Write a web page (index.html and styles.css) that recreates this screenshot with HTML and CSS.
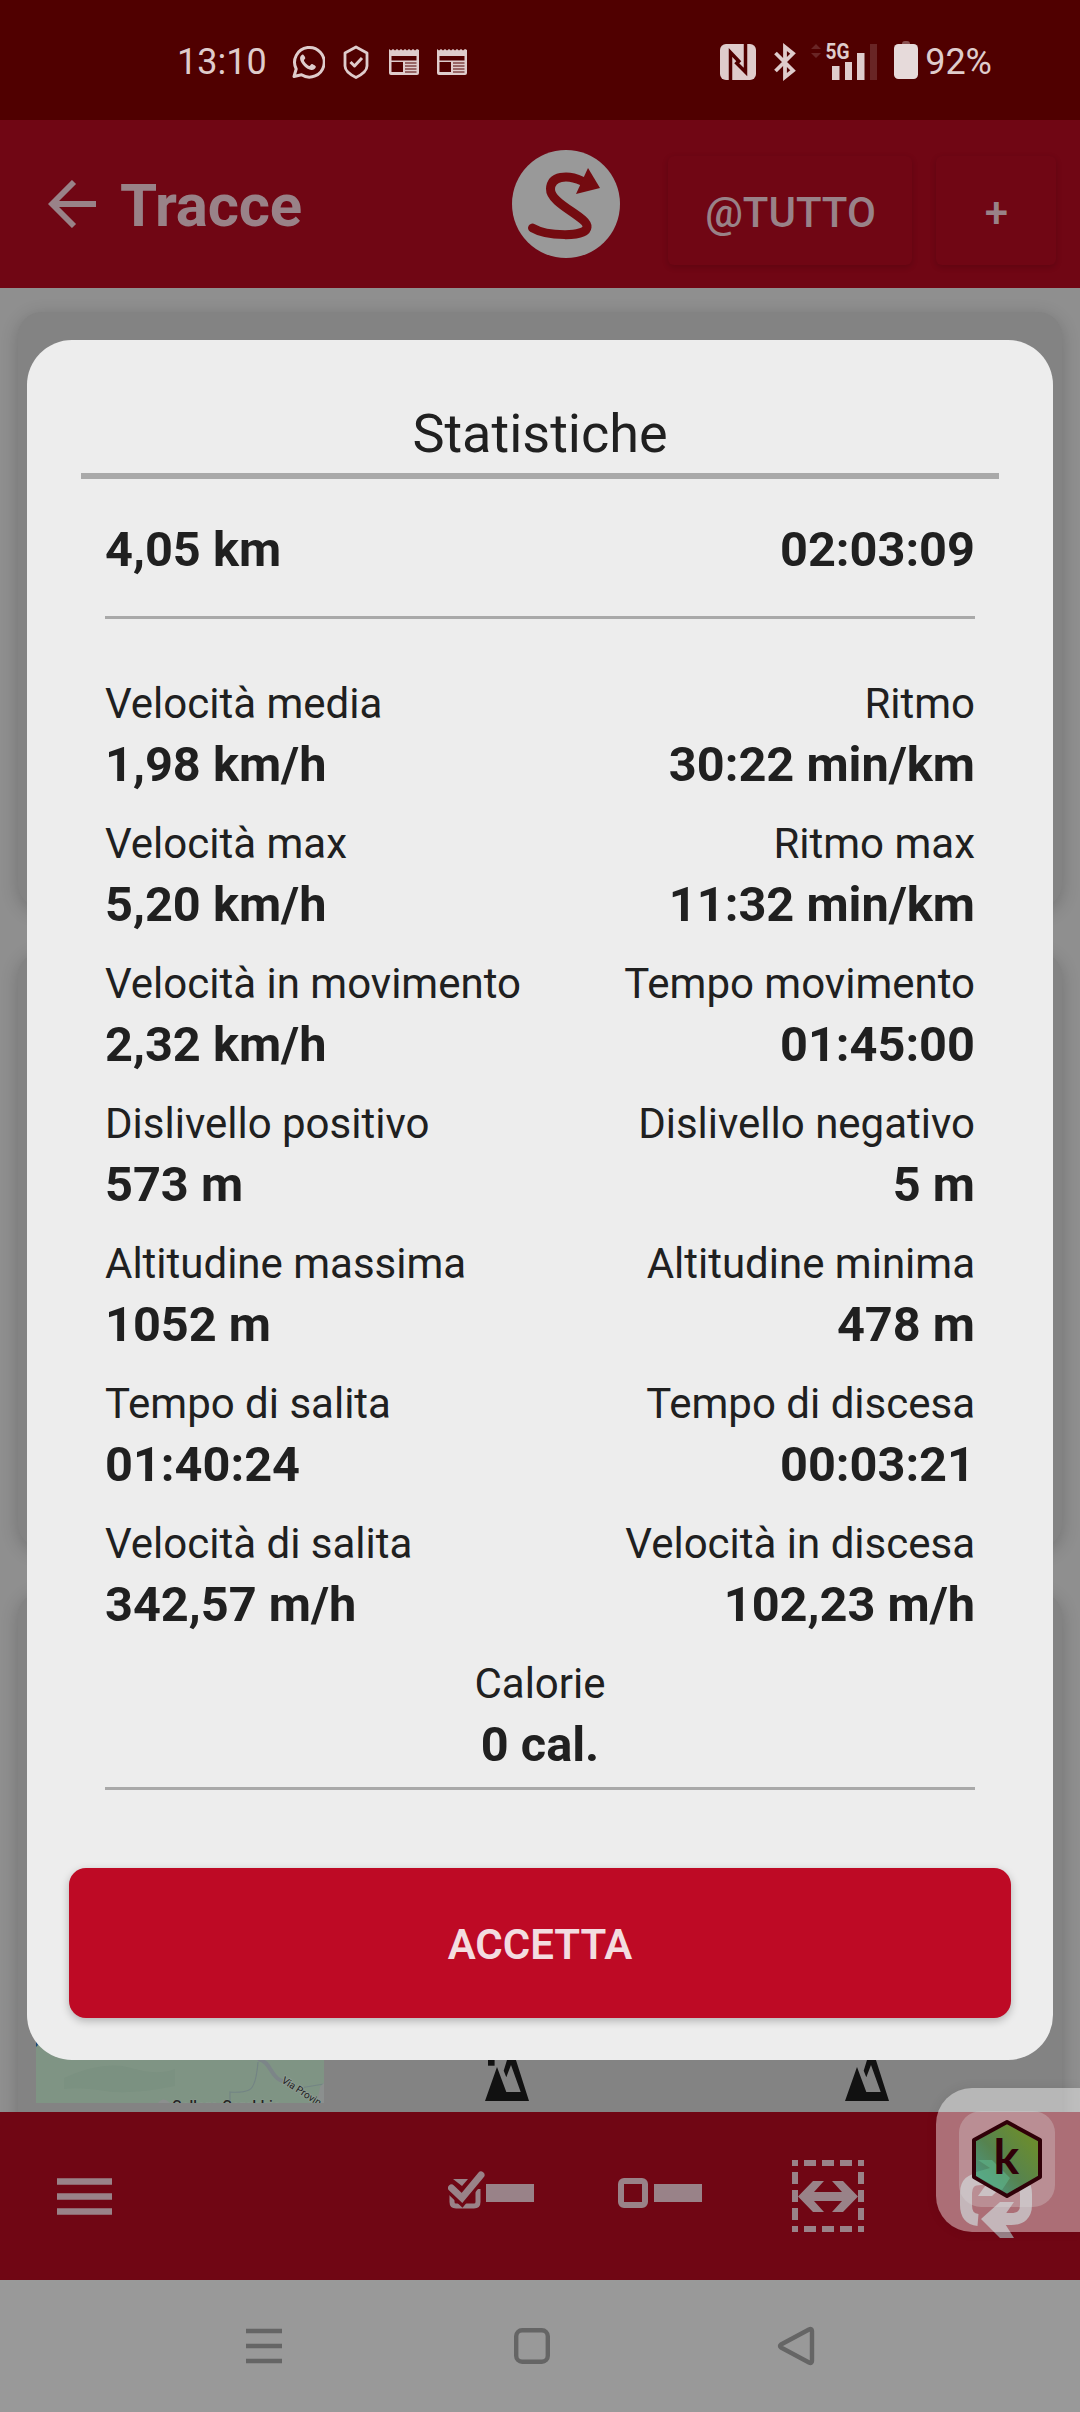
FILE: index.html
```html
<!DOCTYPE html>
<html lang="it">
<head>
    <meta charset="UTF-8">
    <meta name="viewport" content="width=device-width, initial-scale=1.0">
    <title>Tracce</title>
    <link rel="stylesheet" href="styles.css">
</head>
<body>
    <div class="app">
        <!-- Barra di stato -->
        <div class="status-bar">
            <div class="status-left">
                <span class="clock">13:10</span>
                <svg class="whatsapp" width="34" height="34" viewBox="0 0 34 34" fill="none">
                    <path d="M3 31.5 5.2 24A14.8 14.8 0 1 1 10.500 29.800Z" stroke="currentColor" stroke-width="3" stroke-linejoin="round"/>
                    <path d="M11.500 9.500c-1.600.6-2.700 2.400-2.400 4.500.6 4.600 6.300 10.400 11.200 10.900 2.200.2 4.300-1 4.600-3.200.1-.8-3.500-2.900-4.300-2.700-.8.2-1.400 2-2.200 1.900-1.700-.4-5-3.600-5.500-5.400-.1-.8 1.400-1.600 1.400-2.500 0-.7-1.700-3.800-2.800-3.500z" fill="currentColor"/>
                </svg>
                <svg class="shield" width="26" height="34" viewBox="0 0 26 34" fill="none" stroke="currentColor" stroke-width="2.800" stroke-linejoin="round">
                    <path d="M13 2 24 8v13c0 4.500-5 8.500-11 11.500C7 29.500 2 25.500 2 21V8Z"/>
                    <path d="m7.500 17 4 4 7.500-8" stroke-width="3"/>
                </svg>
                <svg class="news" width="30" height="28" viewBox="0 0 30 28">
                    <path d="M0 1l2 1.500L4 1l2 1.500L8 1l2 1.500L12 1l2 1.500L16 1l2 1.500L20 1l2 1.500L24 1l2 1.500L28 1l2 1v23q0 2-2 2H2q-2 0-2-2ZM2.500 8v4.500h25V8ZM2.500 14v10H14V14Z" fill="currentColor" fill-rule="evenodd"/>
                    <path d="M16 15h11.500M16 18h11.500M16 21h11.500M16 24h11.500" stroke="#500000" stroke-width="1"/>
                </svg>
                <svg class="news" width="30" height="28" viewBox="0 0 30 28">
                    <path d="M0 1l2 1.500L4 1l2 1.500L8 1l2 1.500L12 1l2 1.500L16 1l2 1.500L20 1l2 1.500L24 1l2 1.500L28 1l2 1v23q0 2-2 2H2q-2 0-2-2ZM2.500 8v4.500h25V8ZM2.500 14v10H14V14Z" fill="currentColor" fill-rule="evenodd"/>
                    <path d="M16 15h11.500M16 18h11.500M16 21h11.500M16 24h11.500" stroke="#500000" stroke-width="1"/>
                </svg>
            </div>
            <div class="status-right">
                <svg class="nfc" width="36" height="36" viewBox="0 0 36 36" fill="none">
                    <rect width="36" height="36" rx="6" fill="currentColor"/>
                    <path d="M10.500 36V8.500L20 18.500M25.500 0v28L15.500 18" stroke="#500000" stroke-width="3.500"/>
                </svg>
                <svg class="bluetooth" width="22" height="38" viewBox="0 0 22 38" fill="none" stroke="currentColor" stroke-width="3.800">
                    <path d="M1.500 10 19 27.500l-8 6.500V4l8 6.500L1.500 28"/>
                </svg>
                <svg class="signal" width="66" height="38" viewBox="0 0 66 38" fill="currentColor">
                    <path d="m0 6 5-5 5 5ZM0 10l5 5 5-5Z" opacity=".18"/>
                    <text class="signal-label" x="14.500" y="16" textLength="24" lengthAdjust="spacingAndGlyphs">5G</text>
                    <path d="M21 23h7.500v14H21zM34 19h7v18h-7zM46 10h7.500v27H46z"/>
                    <path d="M59 1h7v36h-7z" opacity=".18"/>
                </svg>
                <svg class="battery" width="24" height="38" viewBox="0 0 24 38" fill="currentColor">
                    <path d="M8 3q0-3 3-3h2q3 0 3 3z" opacity=".4"/>
                    <rect y="3" width="24" height="35" rx="4.500" fill="#e6dada"/>
                </svg>
                <span class="percent">92%</span>
            </div>
        </div>

        <!-- Intestazione -->
        <header class="header">
            <svg class="back" width="48" height="48" viewBox="0 0 48 48" fill="none" stroke="currentColor" stroke-width="5.800">
                <path d="M48 24H4M26 2 4 24l22 22"/>
            </svg>
            <h1 class="title">Tracce</h1>
            <svg class="logo" width="108" height="108" viewBox="0 0 108 108">
                <circle cx="54" cy="54" r="54" fill="#999"/>
                <path d="M20.500 78C34 86 74 88 75 77C76 67 38 54 38.500 39C39 26 55 24 70 31" fill="none" stroke="#740b10" stroke-width="9" stroke-linecap="round"/>
                <path d="M76 18 88 38 64 44Z" fill="#740b10"/>
            </svg>
            <button class="header-btn filter">@TUTTO</button>
            <button class="header-btn add">+</button>
        </header>

        <!-- Elenco tracce -->
        <main class="tracks">
            <div class="card"></div>
            <div class="card"></div>
            <div class="card last">
                <svg class="map" width="288" height="66" viewBox="0 0 288 66">
                    <rect width="288" height="66" fill="#7f9484"/>
                    <path d="M28 41q40-18 67-10t44 1v17q-45 9-70 5t-41-2z" fill="#7b9181"/>
                    <path d="M0 0h10L0 10z" fill="#174777"/>
                    <path d="M222 22c12 2 13 17 22 21l10 4" fill="none" stroke="#7c8588" stroke-width="4"/>
                    <path d="M222 25q-2 25-9 28t-19 2v11M264 51l24-4" fill="none" stroke="#738484" stroke-width="1.200"/>
                    <path d="m281 66 3-16 4-4v20zM122 66q5-7 12 0z" fill="#8b8f8e"/>
                    <text class="map-road" x="245" y="45" transform="rotate(33 245 45)">Via Provin</text>
                    <text class="map-place" x="136" y="74" textLength="109" lengthAdjust="spacingAndGlyphs">Calloro Carabbio</text>
                </svg>
                <svg class="mountain" width="44" height="48" viewBox="0 0 44 48" fill="#111">
                    <path d="M3 0h6.600v8.700H3z"/>
                    <path d="M0 44 12 10l9.300 25h14.400L26 8l-4.700 12.300-2.600-6.600L22.300 2 23 0h7l14 44Z"/>
                </svg>
                <svg class="mountain" width="44" height="48" viewBox="0 0 44 48" fill="#111">
                    <path d="M0 44 12 10l9.300 25h14.400L26 8l-4.700 12.300-2.600-6.600L22.300 2 23 0h7l14 44Z"/>
                </svg>
            </div>
        </main>

        <!-- Barra strumenti -->
        <footer class="toolbar">
            <svg class="menu" width="55" height="38" viewBox="0 0 55 38">
                <path d="M0 3.500h55M0 18.500h55M0 33.500h55" stroke="currentColor" stroke-width="6.500"/>
            </svg>
            <svg class="select-all" width="86" height="38" viewBox="0 0 86 38" fill="none">
                <path d="M4 24v7q0 4 4 4h18q4 0 4-4V18" stroke="currentColor" stroke-width="5"/>
                <path d="M5 8h15l-6 7z" fill="currentColor"/>
                <path d="m3.500 18 10.500 10L33 5" stroke="#700614" stroke-width="12"/>
                <path d="m3.500 17 10.500 10L33 4" stroke="currentColor" stroke-width="7" stroke-linecap="round"/>
                <path d="M38 13h48v18H38z" fill="currentColor"/>
            </svg>
            <svg class="select-none" width="84" height="30" viewBox="0 0 84 30">
                <rect x="3" y="3" width="24" height="24" rx="3" fill="none" stroke="currentColor" stroke-width="6"/>
                <path d="M36 6h48v18H36z" fill="currentColor"/>
            </svg>
            <svg class="range" width="72" height="72" viewBox="0 0 72 72" fill="currentColor">
                <path d="M0 0h6v6H0zM12 0h12v6H12zM30 0h12v6H30zM48 0h12v6H48zM66 0h6v6h-6zM0 66h6v6H0zM12 66h12v6H12zM30 66h12v6H30zM48 66h12v6H48zM66 66h6v6h-6zM0 12h6v12H0zM0 30h6v12H0zM0 48h6v12H0zM66 12h6v12h-6zM66 30h6v12h-6zM66 48h6v12h-6z"/>
                <path d="M6 36.500 21 21h11L22 32h28L40 21h11l15 15.500L51 52H40l10-11H22l10 11H21Z"/>
            </svg>
            <svg class="repeat" width="72" height="78" viewBox="0 0 72 78">
                <path d="M38 59H51Q66 59 66 45V34Q66 20 51 19M30 19H21Q6 19 6 33V45Q6 59 18 60" fill="none" stroke="currentColor" stroke-width="12"/>
                <path d="M17 0h14l19 19-18 17H18l12-17ZM54 78H40L21 59l19-17h14L42 59Z" fill="currentColor"/>
            </svg>
        </footer>

        <!-- Navigazione di sistema -->
        <nav class="system-nav">
            <svg class="nav-recent" width="36" height="36" viewBox="0 0 36 36">
                <path d="M0 3h36M0 18h36M0 33h36" stroke="currentColor" stroke-width="4.500"/>
            </svg>
            <svg class="nav-home" width="36" height="36" viewBox="0 0 36 36">
                <rect x="2.200" y="2.200" width="31.600" height="31.600" rx="6" fill="none" stroke="currentColor" stroke-width="4.400"/>
            </svg>
            <svg class="nav-back" width="38" height="40" viewBox="0 0 38 40">
                <path d="M32 3.500Q35 2 35 5v30q0 3-3 1.500L4 21.500Q2 20 4 18.500Z" fill="none" stroke="currentColor" stroke-width="4.400" stroke-linejoin="round"/>
            </svg>
        </nav>

        <!-- Finestra statistiche -->
        <section class="dialog">
            <h2 class="dialog-title">Statistiche</h2>
            <div class="stats">
                <div class="summary">
                    <strong>4,05 km</strong>
                    <strong>02:03:09</strong>
                </div>
                <div class="row">
                    <p class="stat">Velocità media<strong>1,98 km/h</strong></p>
                    <p class="stat">Ritmo<strong>30:22 min/km</strong></p>
                </div>
                <div class="row">
                    <p class="stat">Velocità max<strong>5,20 km/h</strong></p>
                    <p class="stat">Ritmo max<strong>11:32 min/km</strong></p>
                </div>
                <div class="row">
                    <p class="stat">Velocità in movimento<strong>2,32 km/h</strong></p>
                    <p class="stat">Tempo movimento<strong>01:45:00</strong></p>
                </div>
                <div class="row">
                    <p class="stat">Dislivello positivo<strong>573 m</strong></p>
                    <p class="stat">Dislivello negativo<strong>5 m</strong></p>
                </div>
                <div class="row">
                    <p class="stat">Altitudine massima<strong>1052 m</strong></p>
                    <p class="stat">Altitudine minima<strong>478 m</strong></p>
                </div>
                <div class="row">
                    <p class="stat">Tempo di salita<strong>01:40:24</strong></p>
                    <p class="stat">Tempo di discesa<strong>00:03:21</strong></p>
                </div>
                <div class="row">
                    <p class="stat">Velocità di salita<strong>342,57 m/h</strong></p>
                    <p class="stat">Velocità in discesa<strong>102,23 m/h</strong></p>
                </div>
                <div class="row calories">
                    <p class="stat">Calorie<strong>0 cal.</strong></p>
                </div>
            </div>
            <button class="accept">ACCETTA</button>
        </section>

        <!-- Pulsante flottante sopra la barra -->
        <div class="bubble">
            <div class="bubble-icon">
                <svg width="72" height="80" viewBox="0 0 72 80">
                    <defs>
                        <linearGradient id="hex" x1="1" y1="0" x2="0" y2="1">
                            <stop offset=".2" stop-color="#6a8c30"/>
                            <stop offset=".55" stop-color="#56834f"/>
                            <stop offset=".85" stop-color="#4d9580"/>
                        </linearGradient>
                    </defs>
                    <path d="M36 3 69 21v37L36 77 3 58V21Z" fill="url(#hex)" stroke="#300008" stroke-width="4" stroke-linejoin="round"/>
                    <path d="M7 41h14l18 18-8 12-8-3L5 57V53l14-4Z" fill="#5fb68b" opacity=".6"/>
                    <text class="bubble-k" x="22.500" y="55">k</text>
                </svg>
            </div>
        </div>
    </div>
</body>
</html>
```
FILE: styles.css
```css
* {
    box-sizing: border-box;
}

body {
    margin: 0;
    font-family: Roboto, 'Noto Sans', sans-serif;
    background-color: #999;
}

svg {
    display: block;
    flex-shrink: 0;
}

button {
    border: none;
    font-family: inherit;
    padding: 0;
}

.app {
    position: relative;
    display: flex;
    flex-direction: column;
    width: 1080px;
    height: 2412px;
    overflow: hidden;
}

/* Barra di stato */
.status-bar {
    display: flex;
    justify-content: space-between;
    height: 120px;
    padding: 3px 88px 0 177px;
    background-color: #500000;
    color: #dfcccc;
    font-size: 36px;
}

.status-left,
.status-right {
    display: flex;
    align-items: center;
}

.clock {
    width: 114px;
}

.shield {
    margin-left: 18px;
}

.news {
    margin-left: 20px;
}

.news + .news {
    margin-left: 18px;
}

.bluetooth {
    margin-left: 18px;
}

.signal {
    margin-left: 15px;
    overflow: visible;
}

.signal-label {
    font-size: 22px;
    font-weight: 700;
}

.battery {
    margin: 0 7px 4px 17px;
}

/* Intestazione */
.header {
    display: flex;
    align-items: flex-start;
    height: 168px;
    padding: 30px 24px 0 48px;
    background-color: #700614;
    color: #998288;
}

.back {
    margin-top: 30px;
}

.title {
    width: 392px;
    margin: 19px 0 0 24px;
    font-size: 60px;
    line-height: 74px;
    font-weight: 700;
    letter-spacing: -0.2px;
}

.header-btn {
    height: 109px;
    margin-top: 6px;
    padding-top: 3px;
    border-radius: 6px;
    background: none;
    box-shadow: 0 2px 6px rgba(0, 0, 0, 0.16);
    color: inherit;
    font-size: 42px;
    font-weight: 500;
}

.filter {
    width: 244px;
    margin-left: 48px;
    padding-left: 1px;
}

.add {
    width: 120px;
    margin-left: 24px;
    padding-left: 1px;
}

/* Elenco tracce */
.tracks {
    display: flex;
    flex-direction: column;
    gap: 44px;
    height: 1824px;
    padding: 24px 18px 0;
    background-color: #8f8f8f;
    overflow: hidden;
}

.card {
    flex: none;
    height: 596px;
    border-radius: 24px;
    background-color: #838383;
    box-shadow: 0 4px 18px rgba(0, 0, 0, 0.2);
}

.last {
    display: flex;
    align-items: flex-start;
    padding: 445px 0 0 18px;
}

.mountain {
    margin: 20px 0 0 161px;
}

.mountain + .mountain {
    margin-left: 316px;
}

.map-road {
    font-size: 10px;
    fill: #222;
    stroke: #8b9990;
    stroke-width: 2px;
    paint-order: stroke;
}

.map-place {
    font-size: 14px;
    font-weight: 500;
    fill: #222;
    stroke: #8b9990;
    stroke-width: 1px;
    paint-order: stroke;
}

/* Barra strumenti */
.toolbar {
    display: flex;
    align-items: flex-start;
    height: 168px;
    padding: 48px 48px 0 57px;
    background-color: #700614;
    color: #998288;
}

.menu {
    margin-top: 18px;
}

.select-all {
    margin: 11px 0 0 336px;
}

.select-none {
    margin: 18px 0 0 84px;
}

.range {
    margin-left: 90px;
}

.repeat {
    margin-left: 96px;
}

/* Navigazione di sistema */
.system-nav {
    display: flex;
    align-items: center;
    height: 132px;
    padding-left: 246px;
    background-color: #999;
    color: #656565;
}

.nav-home {
    margin-left: 232px;
}

.nav-back {
    margin-left: 227px;
}

/* Finestra statistiche */
.dialog {
    position: absolute;
    top: 340px;
    left: 27px;
    right: 27px;
    height: 1720px;
    padding: 58px 42px 0;
    border-radius: 45px;
    background-color: #ededed;
    color: #202020;
}

.dialog-title {
    height: 81px;
    margin: 0 12px;
    border-bottom: 6px solid #a9a9a9;
    font-size: 54px;
    line-height: 71px;
    font-weight: 400;
    text-align: center;
}

.stats {
    height: 1311px;
    margin: 0 36px;
    border-bottom: 3px solid #a9a9a9;
}

.summary {
    display: flex;
    justify-content: space-between;
    height: 140px;
    margin-bottom: 56px;
    padding-top: 38px;
    border-bottom: 3px solid #a9a9a9;
    font-size: 48.7px;
    line-height: 66px;
}

.row {
    display: flex;
    justify-content: space-between;
    height: 140px;
}

.stat {
    margin: 0;
    font-size: 42px;
    line-height: 57px;
}

.stat + .stat {
    text-align: right;
}

.stat strong {
    display: block;
    font-size: 48.7px;
    line-height: 66px;
}

.calories {
    justify-content: center;
    text-align: center;
}

.accept {
    display: block;
    width: 100%;
    height: 150px;
    margin-top: 78px;
    padding-top: 2px;
    border-radius: 17px;
    background-color: #be0a25;
    box-shadow: 0 3px 9px rgba(0, 0, 0, 0.25);
    color: #f3dce0;
    font-size: 42px;
    font-weight: 600;
}

/* Pulsante flottante */
.bubble {
    position: absolute;
    top: 2088px;
    right: 0;
    width: 144px;
    height: 144px;
    padding: 23px;
    border-radius: 36px 0 0 36px;
    background-color: rgba(255, 255, 255, 0.42);
    box-shadow: 0 0 12px rgba(0, 0, 0, 0.08);
}

.bubble-icon {
    width: 96px;
    height: 96px;
    padding: 8px 12px;
    border-radius: 22px;
    background-color: rgba(220, 220, 220, 0.3);
}

.bubble-k {
    font-family: Lato, sans-serif;
    font-size: 48px;
    font-weight: 700;
    fill: #300008;
}
```
